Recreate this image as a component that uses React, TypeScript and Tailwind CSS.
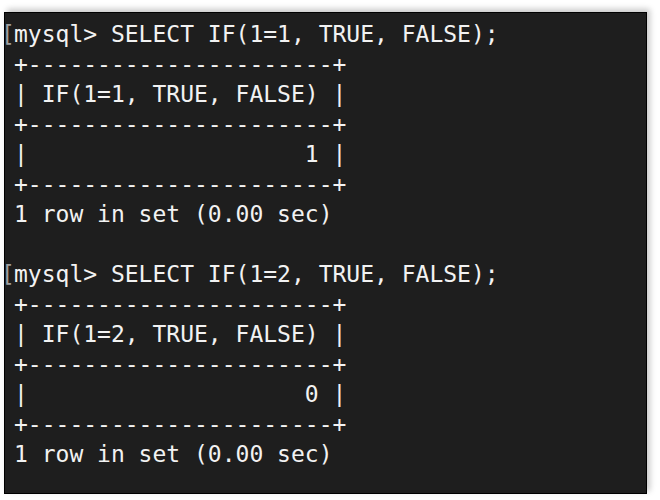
const blocks = [
  { cond: '1=1', result: '1' },
  { cond: '1=2', result: '0' },
];

function Prompt({ text }: { text: string }) {
  return (
    <div className="h-[30px] leading-[30px] whitespace-pre">
      <span className="inline-block w-[13px] -ml-[13px] tracking-[-1px] text-[#a0a0a0]">[</span>
      {text}
    </div>
  );
}

function Line({ text }: { text: string }) {
  return <div className="h-[30px] leading-[30px] whitespace-pre">{text}</div>;
}

export default function App() {
  const border = '+' + '-'.repeat(22) + '+';

  return (
    <div className="w-[660px] h-[500px] bg-white pt-[12px] pl-[4px]">
      <div
        className="w-[643px] h-[482px] bg-[#1e1e1e] border border-black shadow-[3px_-3px_6px_rgba(0,0,0,0.22)] pt-[6px] pl-[9px] text-[#f2f2f2] text-[23px]"
        style={{ fontFamily: '"DejaVu Sans Mono", "Liberation Mono", monospace' }}
      >
        {blocks.map((b, i) => (
          <div key={b.cond}>
            <Prompt text={`mysql> SELECT IF(${b.cond}, TRUE, FALSE);`} />
            <Line text={border} />
            <Line text={`| IF(${b.cond}, TRUE, FALSE) |`} />
            <Line text={border} />
            <Line text={`|${' '.repeat(20)}${b.result} |`} />
            <Line text={border} />
            <Line text="1 row in set (0.00 sec)" />
            {i === 0 && <Line text=" " />}
          </div>
        ))}
      </div>
    </div>
  );
}
